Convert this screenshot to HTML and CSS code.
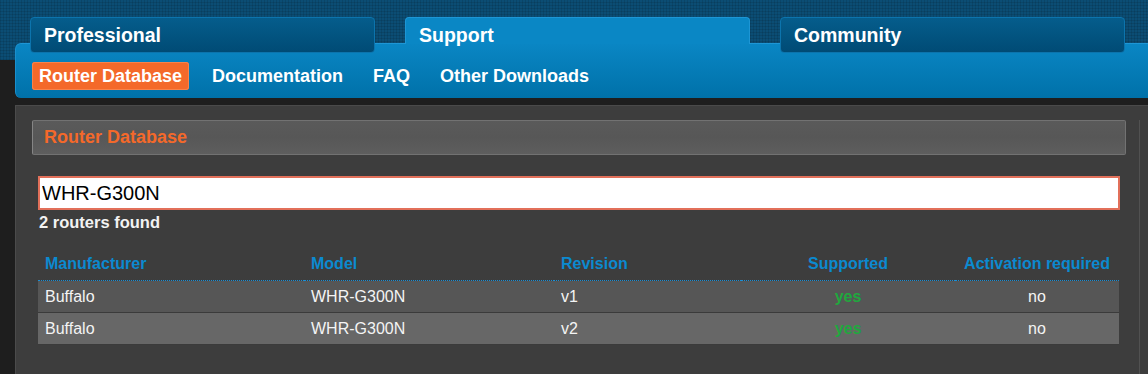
FILE: index.html
```html
<!DOCTYPE html>
<html lang="en">
<head>
    <meta charset="UTF-8">
    <meta name="viewport" content="width=device-width, initial-scale=1.0">
    <title>Router Database</title>
    <link rel="stylesheet" href="styles.css">
</head>
<body>
    <header class="masthead">
        <div class="tabs">
            <a class="tab">Professional</a>
            <a class="tab active">Support</a>
            <a class="tab">Community</a>
        </div>
    </header>

    <nav class="navbar">
        <a class="nav-item current">Router Database</a>
        <a class="nav-item">Documentation</a>
        <a class="nav-item">FAQ</a>
        <a class="nav-item">Other Downloads</a>
    </nav>

    <div class="panel">
        <div class="content">
            <h2 class="box-title">Router Database</h2>

            <input type="text" class="search" value="WHR-G300N" autofocus onfocus="this.setSelectionRange(99, 99)">
            <div class="count">2 routers found</div>

            <table class="routers">
                <thead>
                    <tr>
                        <th class="col-man">Manufacturer</th>
                        <th class="col-model">Model</th>
                        <th class="col-rev">Revision</th>
                        <th class="col-sup center">Supported</th>
                        <th class="col-act center">Activation required</th>
                    </tr>
                </thead>
                <tbody>
                    <tr>
                        <td>Buffalo</td>
                        <td>WHR-G300N</td>
                        <td>v1</td>
                        <td class="center yes">yes</td>
                        <td class="center">no</td>
                    </tr>
                    <tr class="alt">
                        <td>Buffalo</td>
                        <td>WHR-G300N</td>
                        <td>v2</td>
                        <td class="center yes">yes</td>
                        <td class="center">no</td>
                    </tr>
                </tbody>
            </table>
        </div>
    </div>
</body>
</html>
```

FILE: styles.css
```css
html, body {
  margin: 0;
  height: 100%;
}

body {
  background-color: #1e1e1e;
  font-family: "Liberation Sans", Arial, sans-serif;
  display: flex;
  flex-direction: column;
  overflow: hidden;
}

/* top strip with the grid texture */
.masthead {
  height: 60px;
  flex: none;
  background-color: #0b4d74;
  background-image:
    repeating-linear-gradient(0deg, rgba(0,0,0,0.10) 0, rgba(0,0,0,0.10) 1px, transparent 1px, transparent 3px),
    repeating-linear-gradient(90deg, rgba(0,0,0,0.10) 0, rgba(0,0,0,0.10) 1px, transparent 1px, transparent 3px);
}

.tabs {
  display: flex;
  align-items: flex-start;
  gap: 30px;
  padding: 17px 0 0 30px;
}

.tab {
  position: relative;
  z-index: 2;
  box-sizing: border-box;
  width: 345px;
  height: 36px;
  padding-left: 13px;
  line-height: 34px;
  font-size: 19.5px;
  font-weight: bold;
  color: #fff;
  background: linear-gradient(#055d8c, #004b75);
  border: 1px solid #0c74ad;
  border-radius: 4px;
}

.tab.active {
  height: 27px;
  background: #0a87c5;
  border-color: #1d96d5;
  border-bottom: none;
  border-radius: 4px 4px 0 0;
}

/* second level navigation */
.navbar {
  position: relative;
  z-index: 1;
  flex: none;
  box-sizing: border-box;
  height: 55px;
  margin: -17px 0 0 15px;
  padding: 18px 0 0 16px;
  display: flex;
  align-items: flex-start;
  gap: 16px;
  background: linear-gradient(#0a86c4, #0071a9);
  border-top: 1px solid #1d96d5;
  border-left: 1px solid #1a8fcd;
  border-radius: 6px 0 0 6px;
}

.nav-item {
  height: 28px;
  padding: 0 7px;
  line-height: 28px;
  font-size: 18px;
  font-weight: bold;
  color: #fff;
  border-radius: 3px;
}

.nav-item.current {
  background-color: #f4692a;
  box-shadow: 0 0 0 1px #f8834c inset;
}

/* dark content panel */
.panel {
  flex: 1;
  margin: 7px 0 0 15px;
  background-color: #3d3d3d;
  border-top: 1px solid #4a4a4a;
  border-left: 1px solid #4b4b4b;
}

.content {
  width: 1124px;
  height: 100%;
  box-sizing: border-box;
  margin-top: 14px;
  border-right: 1px solid #515151;
}

.box-title {
  box-sizing: border-box;
  height: 35px;
  margin: 0 13px 0 16px;
  padding-left: 11px;
  line-height: 33px;
  font-size: 18px;
  font-weight: bold;
  color: #f4692a;
  background: linear-gradient(#5a5a5a, #575757 50%, #5e5e5e);
  border: 1px solid #727272;
  border-left-color: #858585;
  border-radius: 2px;
}

.search {
  display: block;
  box-sizing: border-box;
  width: 1082px;
  height: 34px;
  margin: 21px 0 0 22px;
  padding: 0 2px;
  font-family: "Liberation Sans", Arial, sans-serif;
  font-size: 20px;
  color: #000;
  background: #fff;
  border: 2px solid #e2705a;
  border-radius: 0;
  outline: none;
  caret-color: #000;
}

.count {
  margin: 3px 0 0 23px;
  font-size: 16.5px;
  font-weight: bold;
  color: #f2f2f2;
}

.routers {
  width: 1081px;
  margin: 16px 0 0 22px;
  border-collapse: collapse;
  table-layout: fixed;
  font-size: 16px;
}

.routers th,
.routers td {
  padding: 0 7px;
  text-align: left;
  white-space: nowrap;
}

.routers th {
  height: 32px;
  font-weight: bold;
  color: #0b8ad0;
  border-bottom: 1px dotted #1a8fd6;
}

.routers td {
  height: 31px;
  color: #f4f4f4;
  background-color: #565656;
  border-bottom: 1px solid #3b3b3b;
}

.routers tr.alt td {
  background-color: #676767;
}

.routers .center {
  text-align: center;
}

.routers td.yes {
  color: #1fa83e;
  font-weight: bold;
}

/* widths are content widths, 14px of padding is added to each */
.col-man { width: 252px; }
.col-model { width: 236px; }
.col-rev { width: 173px; }
.col-sup { width: 200px; }
.col-act { width: 150px; }
```
